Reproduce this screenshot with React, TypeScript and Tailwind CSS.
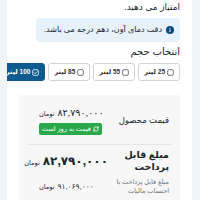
import { RefreshCw } from "lucide-react";

const sizes = [25, 55, 85, 100];
const selected = 100;

function InfoDot() {
  return (
    <svg width="8" height="8" viewBox="0 0 16 16" className="shrink-0">
      <circle cx="8" cy="8" r="8" fill="#0b4a7d" />
      <rect x="7" y="7" width="2" height="5" fill="#fff" />
      <circle cx="8" cy="4.6" r="1.1" fill="#fff" />
    </svg>
  );
}

function Box({ checked }: { checked: boolean }) {
  return (
    <svg width="7" height="7" viewBox="0 0 16 16" className="shrink-0">
      <rect x="1.5" y="1.5" width="13" height="13" rx="3" fill="none" stroke={checked ? "#fff" : "#555"} strokeWidth="1.8" />
      {checked && <path d="M4.5 8.2l2.4 2.4 4.6-5" fill="none" stroke="#fff" strokeWidth="2" />}
    </svg>
  );
}

export default function App() {
  return (
    <div
      dir="rtl"
      className="min-h-[200px] bg-[#f3f4f6] pr-2 pl-[7px] font-['Liberation_Sans','DejaVu_Sans',sans-serif] text-[#212529]"
    >
      <div className="h-[200px] overflow-hidden bg-white px-3">
        <p className="pt-[1px] text-[9px] leading-[12px]">امتیاز می دهید.</p>

        <div className="mt-[5px] inline-flex h-6 items-center gap-1 rounded bg-[#e6f1fa] pr-[6px] pl-2 text-[8px]">
          <InfoDot />
          <span>دقت دمای آون، دهم درجه می باشد.</span>
        </div>

        <h3 className="mt-[3px] text-[10px] leading-[14px]">انتخاب حجم</h3>

        <div className="mt-[4px] flex gap-[3px]">
          {sizes.map((s) => {
            const on = s === selected;
            return (
              <button
                key={s}
                className={
                  on
                    ? "flex h-[18px] items-center gap-[2px] whitespace-nowrap rounded-[3px] border border-[#0d5a8e] bg-[#0d5a8e] px-[5px] text-[6.5px] font-bold text-white"
                    : "flex h-[18px] items-center gap-[2px] whitespace-nowrap rounded-[3px] border border-[#cfd4d9] bg-white px-[5px] text-[6.5px] font-bold text-[#333]"
                }
              >
                <Box checked={on} />
                <span>{s} لیتر</span>
              </button>
            );
          })}
        </div>

        <div className="mt-[14px] bg-[#f7f7f8] px-2 pt-[11px]">
          <div className="flex items-center border-b border-[#e4e6e9] pb-[9px]">
            <div className="w-[64px] shrink-0 pr-[3px] text-[8.5px]">قیمت محصول</div>
            <div className="flex flex-1 flex-col items-end pl-[12px]">
              <div className="flex items-baseline gap-[3px]">
                <span className="text-[9.5px] tracking-[0.3px]">۸۲,۷۹۰,۰۰۰</span>
                <span className="text-[6.5px]">تومان</span>
              </div>
              <span className="mt-[3px] flex h-[12px] items-center gap-[2px] rounded-[2px] bg-[#2aa84a] px-[3px] text-[6.5px] text-white">
                <RefreshCw size={6} strokeWidth={3} />
                قیمت به روز است
              </span>
            </div>
          </div>

          <div className="flex items-center pt-[4px]">
            <div className="w-[64px] shrink-0 pr-[3px] text-[9.5px] leading-[12px] font-bold">مبلغ قابل پرداخت</div>
            <div className="flex flex-1 justify-end pl-[12px]">
              <div className="flex items-baseline gap-[3px]">
                <span className="text-[12px] font-bold tracking-[0.3px]">۸۲,۷۹۰,۰۰۰</span>
                <span className="text-[6.5px]">تومان</span>
              </div>
            </div>
          </div>

          <div className="flex items-center pt-[4px] pb-2">
            <div className="w-[64px] shrink-0 pr-[3px] text-[6.5px] leading-[9px] text-[#6c757d]">
              مبلغ قابل پرداخت با احتساب مالیات
            </div>
            <div className="flex flex-1 justify-end pl-[12px]">
              <div className="flex items-baseline gap-[3px]">
                <span className="text-[7.5px] tracking-[0.3px]">۹۱,۰۶۹,۰۰۰</span>
                <span className="text-[6.5px]">تومان</span>
              </div>
            </div>
          </div>
        </div>
      </div>
    </div>
  );
}
